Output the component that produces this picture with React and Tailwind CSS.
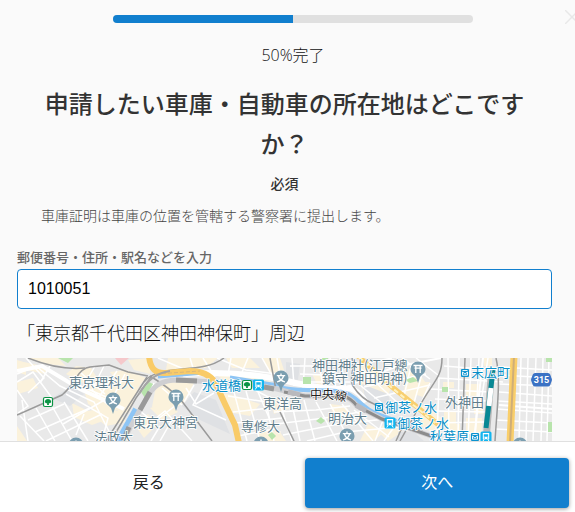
const mapFont = '"Noto Sans CJK JP", sans-serif';

const parks = [
  'M58 358h15l-5 5z', 'M303 377h8v7h-8z', 'M442 387h6v5h-6z', 'M548 422h5v10h-5z', 'M268 435l4-3 4 4-4 4z',
  'M546 358h6v4h-6z', 'M322 358h6v2h-6z', 'M141 392l8-10 4 2-8 14z', 'M405 380l8-3 5 4-8 2z', 'M316 421l5-4 4 4-4 3z',
];

const sandBlocks = [
  'M19 361l28 6-2 7-24-5z', 'M28 358h30l8 8-20-2z', 'M66 374l10-8 15 2 6 10-14 5z', 'M84 390l20-14 34 12-8 20-28 4-14-8z', 'M110 372l16-2 20 8-12 14-14-6z',
  'M130 384l12-4-14 32-14 6z', 'M90 400l30 12 6 10-20 4-12-10z', 'M17 360l9 3v12l-9-3z', 'M17 382l16-4 5 10-20 6z', 'M128 360l22-2v16l-16-4z',
  'M72 403l16 8 22-4 4 10-22 8-18-8z', 'M156 386l12-5 26 2-8 18-18 12-16-6z', 'M168 358h50l-12 10-40 2z', 'M218 392l18 4 24 8-10 12-22-4z',
  'M150 408l20-6 8 10-16 8z', 'M212 372l30 2 30 8-4 4-44-6z', 'M226 358h24l10 10-28 0z', 'M134 424l14-10 10 10-14 14z',
  'M262 358h18l4 12-14 4z', 'M270 400h16l4 8-16 6z', 'M312 374h16l8 8-18 4z', 'M354 362l20 8 18 14-6 18-22-8z',
  'M398 366l20 6 10 14-16 8z', 'M418 382h12l-4 16-12-4z', 'M405 384l12 4-2 14-12-6z', 'M420 404l22 14-2 20-18-12z', 'M376 430l14-8 12 10-14 9z',
  'M258 428l22 4 6 9h-28z', 'M368 424l16 8-10 9h-14z', 'M466 418h16v16h-16z', 'M474 402h9v12h-9z', 'M17 426l10 15H17z', 'M484 358h8v8h-8z', 'M443 382h11v6h-11z',
  'M466 384h14v12h-14z', 'M444 412h12v12h-12z', 'M446 424h14v10h-14z', 'M330 404l16 2 6 10-18 2z',
];

const grayBlocks = [
  'M194 392l22 8 14 34-30-14-18-14z', 'M286 362l14 2-2 16-12-2z', 'M362 384l26 10 4 16-26-8z', 'M398 432l16 0 10 9h-26z', 'M52 398l20-12 12 8-14 12z', 'M450 434h16v7h-16z',
];

const streets = [
  'M17 374L36 366 60 386 94 402 114 441', 'M17 382L33 372 52 398', 'M26 358L44 378 28 393', 'M50 366L40 383',
  'M17 390L28 406 18 413', 'M22 400L28 441', 'M20 416L44 441', 'M36 408L55 441', 'M52 406L72 441', 'M64 402L88 441',
  'M28 420L64 404', 'M35 432L90 408', 'M46 441L102 414', 'M63 424L108 398', 'M66 394L108 418 102 441', 'M76 384L118 402',
  'M80 372L105 394', 'M95 366L82 389', 'M104 366L92 390 107 404', 'M117 371L99 397', 'M125 374L111 401', 'M84 414L76 435',
  'M154 383L140 411 154 422 180 402', 'M162 388L182 405', 'M145 427L165 411 192 441', 'M160 426L151 441', 'M173 418L160 441',
  'M186 388L196 404 214 393', 'M194 385L184 402', 'M204 386L193 405 226 420', 'M218 383L232 389 255 390 274 400',
  'M228 396L266 402 274 441', 'M233 412L270 408', 'M236 423L282 418', 'M238 436L274 429', 'M234 392L247 441', 'M246 391L260 441',
  'M258 392L270 420', 'M158 358L186 370', 'M190 358L194 371', 'M203 358L215 377', 'M217 358L246 370 284 375',
  'M231 358L228 375', 'M248 358L240 377', 'M262 358L274 379', 'M277 358L282 386', 'M292 358L294 386', 'M305 358L303 388',
  'M318 358L324 392', 'M330 358L336 388', 'M290 366L350 366', 'M300 374L348 376', 'M308 382L350 382', 'M340 358L346 390',
  'M279 400L292 441', 'M292 404L300 441', 'M304 400L315 441', 'M316 402L337 441', 'M330 404L350 441', 'M342 404L373 441',
  'M354 410L389 437', 'M274 412L316 410 350 406', 'M276 424L325 418 366 411', 'M283 435L333 425 385 419', 'M307 441L345 432 400 427',
  'M360 368L400 405', 'M361 386L383 404', 'M352 366L392 358', 'M364 387L426 374', 'M374 398L430 385', 'M402 358L430 379',
  'M416 358L438 375', 'M398 366L394 394', 'M411 366L404 396', 'M423 370L414 403', 'M430 383L416 414', 'M390 402L375 441',
  'M402 416L384 441', 'M439 378L437 441', 'M448 358L449 441', 'M459 358L458 441', 'M471 358L468 441', 'M479 358L475 441',
  'M488 358L481 402', 'M444 366L506 371', 'M438 378L503 382', 'M430 389L490 392', 'M435 399L488 401', 'M434 411L486 412',
  'M430 423L485 422', 'M426 434L483 433', 'M499 367L553 370', 'M501 375L553 378', 'M499 384L553 386', 'M499 392L553 396',
  'M497 401L553 404', 'M497 409L553 413', 'M496 420L553 423', 'M495 429L553 432', 'M521 358L519 441', 'M528 358L526 441',
  'M536 358L533 441', 'M543 358L541 441', 'M549 358L547 441',
];

const rails = [
  'M17 415L62 395Q70 388 76 378T90 367L109 365 128 372 148 376',
  'M28 358C48 366 66 370 85 368', 'M150 376Q170 388 181 400L212 441', 'M144 382C160 362 200 376 224 358',
  'M352 358C356 370 348 378 353 386 358 394 364 400 374 404L386 414',
  'M442 358C442 379 432 382 418 409L400 441', 'M465 358L462 441', 'M496 358C501 379 497 408 495 441', 'M270 358L276 390',
  'M396 441L405 421 430 436', 'M280 412L294 441',
];

const mapLabels = [
  [69, 387, '東京理科大'], [133, 427, '東京大神宮'], [94, 442, '法政大'],
  [263, 408, '東洋高'], [241, 431, '専修大'], [328, 423, '明治大'],
  [312, 370, '神田神社(江戸總'], [322, 383, '鎮守 神田明神)'], [445, 407, '外神田'],
];

const stationLabels = [
  [202, 390, '水道橋'], [471, 377, '末広町'], [385, 412, '御茶ノ水'], [397, 428, '御茶ノ水'], [430, 441, '秋葉原'],
];

const pins = [
  [113, 400, 'school'], [176, 397, 'shrine'], [281, 378, 'school'], [418, 369, 'shrine'],
  [347, 436, 'school'], [76, 445, 'school'], [261, 444, 'school'], [520, 445, 'school'],
];

function Pin({ x, y, kind }) {
  return (
    <g transform={`translate(${x} ${y})`}>
      <path d="M-7.500 0a7.500 7.500 0 1 1 15 0c0 4-3 5-5.500 8L0 14l-2-6c-2.500-3-5.500-4-5.500-8z" fill="#7b9eb0" />
      {kind === 'school' ? (
        <path d="M0-4.500v2M-4.200-2.300h8.400M-2.500-2c.6 3 3 5 6.500 6M2.500-2c-.6 3-3 5-6.500 6" stroke="#fff" strokeWidth="1.300" fill="none" />
      ) : (
        <path d="M-4.500-3.500h9M-3.500-.8h7M-2.200-3.500v7.500M2.200-3.500v7.500" stroke="#fff" strokeWidth="1.300" fill="none" />
      )}
    </g>
  );
}

function TreeSign({ x, y }) {
  return (
    <g transform={`translate(${x} ${y})`}>
      <rect x="-4.500" y="-4.500" width="9" height="9" rx="1.500" fill="#fff" stroke="#0b9444" strokeWidth="1.200" />
      <path d="M-3.200 0c0-2 1.500-3 3.200-3s3.200 1 3.200 3c-.7 1.200-1.700 1.400-2.300 1V3h-1.800V1C-1.500 1.400-2.500 1.200-3.200 0z" fill="#0b9444" />
    </g>
  );
}

function TrainSign({ x, y }) {
  return (
    <g transform={`translate(${x} ${y})`}>
      <rect x="-5.500" y="-5.500" width="11" height="11" rx="1.500" fill="#12b5ef" />
      <path d="M-3.200-4h6.400v6.200h-6.400z" fill="#fff" />
      <path d="M-1.800 2l-1.400 2.500M1.800 2l1.400 2.500" stroke="#fff" />
      <path d="M-2.200-2.800h4.400v2.600h-4.400zM-2.200.6h1.200v1h-1.200zM1 .6h1.200v1H1z" fill="#12b5ef" />
    </g>
  );
}

function MetroSign({ x, y }) {
  return (
    <g transform={`translate(${x} ${y})`}>
      <rect x="-4" y="-4" width="8" height="8" rx="1" fill="#0b93cf" />
      <path d="M-2.500-2.500h5M-2.500-1v3.200h5V-1L0 1z" stroke="#fff" strokeWidth=".9" fill="none" />
    </g>
  );
}

function AreaMap() {
  return (
    <svg
      role="img"
      aria-label="神田神保町周辺の地図"
      viewBox="17 358 535 84"
      preserveAspectRatio="xMidYMin slice"
      className="block h-[84px] w-full"
      fontFamily={mapFont}
    >
      <rect x="17" y="358" width="535" height="84" fill="#e9e9e9" />
      {sandBlocks.map((d) => <path key={d} d={d} fill="#fbf2dc" />)}
      {grayBlocks.map((d) => <path key={d} d={d} fill="#dfe1e4" />)}
      <g stroke="#fff" strokeWidth="1.500" fill="none">
        {streets.map((d) => <path key={d} d={d} />)}
      </g>
      <g stroke="#fff" strokeWidth="4" fill="none">
        <path d="M17 371L42 366 80 389 124 409" />
        <path d="M183 374Q240 370 287 381T350 388Q360 392 366 402" strokeWidth="6" />
        <path d="M483 358L474 441" strokeWidth="2" />
        <path d="M352 384L395 367 441 358" strokeWidth="2" />
        <path d="M499 405L552 409" strokeWidth="2" />
      </g>
      {parks.map((d) => <path key={d} d={d} fill="#b8e4ac" />)}
      <path d="M115 358h14l-8 7z" fill="#f5c8cb" />
      <g stroke="#8ec5f5" fill="none">
        <path d="M136 409L118 441" strokeWidth="6" />
        <path d="M158 377L204 373M230 377L284 386" strokeWidth="3" />
        <path d="M283 388C313 393 337 387 350 395S363 408 377 414L407 425" strokeWidth="4" />
      </g>
      <g stroke="#9a9a9a" strokeWidth="1.500" fill="none">
        {rails.map((d) => <path key={d} d={d} />)}
        <path d="M147 377L106 441M151 377L136 398 111 441" />
      </g>
      <g fill="none">
        <path d="M123 441L142 406 150 393Q158 380 177 380L197 381 248 384 277 389 305 396H343Q351 398 357 406L382 419 434 437" stroke="#cfcfd2" strokeWidth="5" />
        <path d="M129 427L123 441M150 392L140 410M176 380L197 381M264 387L274 389" stroke="#9a9a9a" strokeWidth="5" />
        <path d="M284 392L305 396H343Q351 398 357 406L382 419 434 437" stroke="#8c8c8c" strokeWidth="3" />
        <path d="M288 392L300 395M356 405L366 411" stroke="#b9b9bd" strokeWidth="5" />
      </g>
      <g fill="none">
        <path d="M149 356C150 367 154 374 166 373L190 371Q207 371 215 382L225 404 235 425 239 443" stroke="#f9cb68" strokeWidth="6" />
        <path d="M156 374L200 371" stroke="#d9b77a" strokeWidth="1" strokeDasharray="4 2" />
        <path d="M139 394Q150 374 170 371" stroke="#a5a5a5" strokeWidth="2" />
        <path d="M358 356L391 386 417 407 440 426" stroke="#f8cf70" strokeWidth="5" />
        <path d="M359 357L391 387 417 408 440 427" stroke="#fff2be" strokeWidth="2" strokeDasharray="5 3" />
        <path d="M514 356L510 443" stroke="#f9ce6a" strokeWidth="7" />
        <path d="M514 356L510 443" stroke="#cfae78" strokeWidth="2" />
      </g>
      <g fill="none">
        <path d="M491 378L486 441" stroke="#b7b7b7" strokeWidth="7" />
        <path d="M493 370L486 428" stroke="#078894" strokeWidth="5" />
        <path d="M491 388L489 406" stroke="#fff" strokeWidth="5" />
      </g>
      <g fontSize="13" fill="#607d8b" stroke="#fff" strokeWidth="1.500" paintOrder="stroke">
        {mapLabels.map(([x, y, label]) => <text key={label} x={x} y={y}>{label}</text>)}
      </g>
      <g fontSize="13" fill="#078fc8" stroke="#fff" strokeWidth="1.500" paintOrder="stroke">
        {stationLabels.map(([x, y, label]) => <text key={`${label}-${y}`} x={x} y={y}>{label}</text>)}
      </g>
      <text x="310" y="399" fontSize="12" fill="#222" stroke="#fff" strokeWidth="1.500" paintOrder="stroke" rotate="0 0 12">中央線</text>
      {pins.map(([x, y, kind]) => <Pin key={`${x}-${y}`} x={x} y={y} kind={kind} />)}
      <TreeSign x={48} y={402} />
      <TreeSign x={247} y={385} />
      <TrainSign x={258.5} y={385} />
      <TrainSign x={390} y={423} />
      <TrainSign x={486} y={437} />
      <MetroSign x={465} y={373} />
      <MetroSign x={379} y={407} />
      <MetroSign x={475} y={437} />
      <path d="M535 373h13q1.500 0 2.200 1.500l1.500 4q.5 1.300 0 2.500l-1.500 4q-.7 1.500-2.200 1.500h-13q-1.500 0-2.200-1.500l-1.500-4q-.5-1.200 0-2.500l1.500-4q.7-1.500 2.200-1.500z" fill="#3b72c4" />
      <text x="541.500" y="383" textAnchor="middle" fontSize="9" fontWeight="700" fill="#fff" fontFamily="Roboto, sans-serif">315</text>
    </svg>
  );
}

export default function App() {
  return (
    <form
      className="relative flex h-screen flex-col overflow-hidden bg-[#fafafa] font-['Noto_Sans_CJK_JP',sans-serif] text-[#333]"
      onSubmit={(event) => event.preventDefault()}
    >
      <button type="button" aria-label="閉じる" className="absolute -right-1 top-2.5 h-3.5 w-3.5 text-[#e8e8e8]">
        <svg viewBox="0 0 14 14" className="h-full w-full" stroke="currentColor" strokeWidth="1.500">
          <path d="M0 0l14 14M14 0L0 14" />
        </svg>
      </button>

      <div className="min-h-0 flex-1 overflow-hidden">
        <div className="flex flex-col items-center pl-[11px] pt-[15px]">
          <div role="progressbar" aria-label="進捗" aria-valuenow={50} className="h-2 w-[360px] max-w-full overflow-hidden rounded bg-[#e0e0e0]">
            <div className="h-full w-1/2 bg-[#117fce]" />
          </div>
          <p className="mt-5 font-['Open_Sans','Noto_Sans_CJK_JP',sans-serif] text-base font-light text-[#111]">50%完了</p>
        </div>

        <main className="pl-[17px] pr-[23px]">
          <h1 className="mt-4 px-6 text-center text-2xl font-medium leading-10">申請したい車庫・自動車の所在地はどこですか？</h1>
          <p className="mt-2 text-center text-sm font-medium leading-6">必須</p>
          <p className="mt-2.5 px-6 text-sm font-light leading-5 text-[#444]">車庫証明は車庫の位置を管轄する警察署に提出します。</p>

          <label htmlFor="place" className="mb-0.5 mt-[22px] block text-[13px] font-medium leading-5 text-[#666]">郵便番号・住所・駅名などを入力</label>
          <input
            id="place"
            type="text"
            defaultValue="1010051"
            className="block h-10 w-full rounded border border-[#117fce] bg-white px-2.5 font-['Liberation_Sans',sans-serif] text-base text-black outline-none"
          />
          <p className="mb-3 mt-[9px] text-lg font-light leading-7 text-[#111]">「東京都千代田区神田神保町」周辺</p>
          <AreaMap />
        </main>
      </div>

      <footer className="flex shrink-0 gap-4 border-t border-[#e0e0e0] bg-white pb-1 pl-2 pr-1.5 pt-4">
        <button type="button" className="h-[50px] flex-1 pb-1 text-base text-[#222]">戻る</button>
        <button type="submit" className="h-[50px] w-[47%] rounded bg-[#117fce] pb-1 text-base text-white shadow-[0_1px_4px_rgba(0,0,0,0.4)]">次へ</button>
      </footer>
    </form>
  );
}
